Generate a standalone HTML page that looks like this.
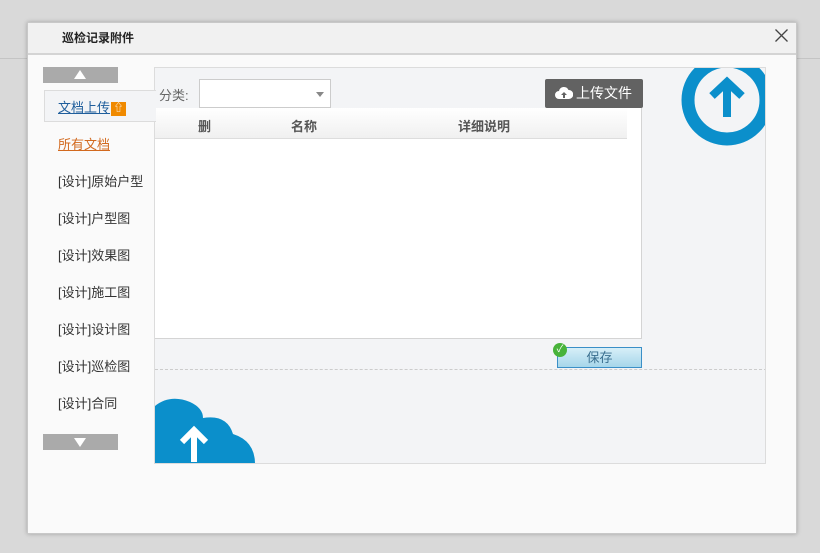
<!DOCTYPE html>
<html><head><meta charset="utf-8"><style>
*{margin:0;padding:0;box-sizing:border-box}
body{width:820px;height:553px;background:#d9d9d9;font-family:"Liberation Sans","Noto Sans CJK SC",sans-serif;font-size:13px;color:#333;position:relative;overflow:hidden}
.abs{position:absolute}
.dlg{left:27px;top:22px;width:770px;height:512px;background:#fafafa;border:1px solid #c8c8c8;box-shadow:0 0 4px rgba(0,0,0,.25);overflow:hidden}
.hd{left:0;top:0;width:100%;height:32px;background:#f1f1f1;border-bottom:2px solid #d4d4d4}
.nav{left:30px;width:100px;color:#333;font-size:13px}
</style></head><body>
<div class="abs" style="left:0;top:58px;width:820px;height:1px;background:#c4c4c4"></div>
<div class="abs dlg">
 <div class="abs hd"><div class="abs" style="left:34px;top:6px;font-size:12px;font-weight:bold;color:#222">巡检记录附件</div>
 <svg class="abs" style="left:747px;top:6px" width="13" height="13" viewBox="0 0 13 13"><path d="M0.5 0.5L12.5 12.5M12.5 0.5L0.5 12.5" stroke="#444" stroke-width="1.3"/></svg></div>
 <div class="abs" style="left:126px;top:44px;width:612px;height:397px;background:#f3f4f6;border:1px solid #dcdcdc;overflow:hidden">
  <div class="abs" style="left:4px;top:17px;color:#666">分类:</div>
  <div class="abs" style="left:44px;top:11px;width:132px;height:29px;background:#fff;border:1px solid #ccc"><div class="abs" style="right:6px;top:12px;border:4px solid transparent;border-top:5px solid #888"></div></div>
  <div class="abs" style="left:390px;top:11px;width:98px;height:29px;background:#626262;border-radius:2px;color:#fff;font-size:14px;line-height:29px;padding-left:31px">上传文件
   <svg class="abs" style="left:10px;top:7px" width="18" height="14" viewBox="0 0 18 14"><path d="M4 13a4 4 0 0 1 0-8 5 5 0 0 1 9.5-1A4 4 0 0 1 14 13z" fill="#fff"/><path d="M9 6l-3 3h2v3h2V9h2z" fill="#626262"/></svg></div>
  <div class="abs" style="left:0;top:40px;width:487px;height:231px;background:#fff;border-right:1px solid #d4d4d4;border-bottom:1px solid #d4d4d4">
   <div class="abs" style="left:0;top:0;width:472px;height:31px;background:linear-gradient(#fff,#f0f0f0);border-bottom:1px solid #ddd;font-weight:bold;color:#555">
    <span class="abs" style="left:43px;top:8px">删</span><span class="abs" style="left:136px;top:8px">名称</span><span class="abs" style="left:303px;top:8px">详细说明</span></div>
  </div>
  <div class="abs" style="left:402px;top:279px;width:85px;height:21px;border:1px solid #3a8fc7;background:linear-gradient(#d7eff8,#a6d6ea);text-align:center;line-height:19px;color:#3a6f8f">保存</div>
  <div class="abs" style="left:398px;top:275px;width:14px;height:14px;border-radius:50%;background:#48b33a;color:#fff;font-size:10px;line-height:14px;text-align:center">✓</div>
  <div class="abs" style="left:0;top:301px;width:612px;border-top:1px dashed #ccc"></div>
  <svg class="abs" style="left:526px;top:-10px" width="100" height="100" viewBox="0 0 100 100"><circle cx="46" cy="42" r="39" fill="none" stroke="#0b8fcb" stroke-width="13"/><path d="M46 59V25M31 38l15-14 15 14" stroke="#0b8fcb" stroke-width="8" fill="none"/></svg>
  <svg class="abs" style="left:0;top:328px" width="100" height="68" viewBox="0 0 100 68"><path d="M0 10Q15 -2 35 6Q48 12 48 22Q72 18 78 38Q100 45 100 68H0z" fill="#0b8fcb"/><path d="M39 66V34M27 46l12-12 12 12" stroke="#fff" stroke-width="6" fill="none"/></svg>
 </div>
 <div class="abs" style="left:15px;top:44px;width:75px;height:16px;background:#aaa"><div class="abs" style="left:31px;top:3px;border:6px solid transparent;border-bottom:9px solid #fff;border-top:0"></div></div>
 <div class="abs" style="left:16px;top:67px;width:112px;height:32px;background:#f3f4f6;border:1px solid #dcdcdc;border-right:0"></div>
 <div class="abs nav" style="top:74px;color:#1f5e9c;text-decoration:underline">文档上传<span style="display:inline-block;width:15px;height:14px;background:#f08a00;color:#fff;font-size:10px;text-align:center;line-height:14px;vertical-align:1px;margin-left:1px">⇧</span></div>
 <div class="abs nav" style="top:111px;color:#d2691e;text-decoration:underline">所有文档</div>
 <div class="abs nav" style="top:148px">[设计]原始户型</div>
 <div class="abs nav" style="top:185px">[设计]户型图</div>
 <div class="abs nav" style="top:222px">[设计]效果图</div>
 <div class="abs nav" style="top:259px">[设计]施工图</div>
 <div class="abs nav" style="top:296px">[设计]设计图</div>
 <div class="abs nav" style="top:333px">[设计]巡检图</div>
 <div class="abs nav" style="top:370px">[设计]合同</div>
 <div class="abs" style="left:15px;top:411px;width:75px;height:16px;background:#aaa"><div class="abs" style="left:31px;top:4px;border:6px solid transparent;border-top:9px solid #fff;border-bottom:0"></div></div>
</div>
</body></html>
